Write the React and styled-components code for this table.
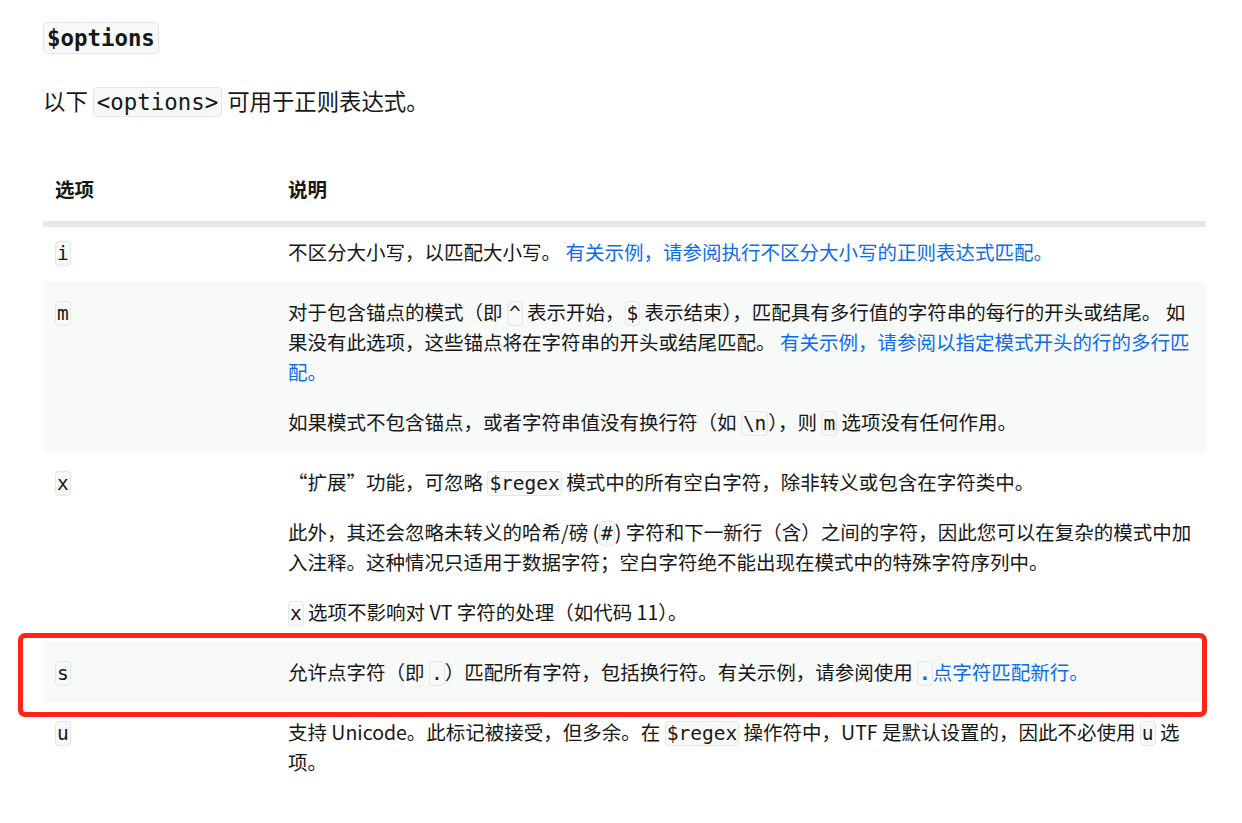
import styled, { createGlobalStyle } from "styled-components"

const GlobalStyle = createGlobalStyle`
  html, body {
    margin: 0;
    padding: 0;
    background: #fff;
  }
  body {
    font-family: "Noto Sans CJK SC", "Noto Sans", sans-serif;
    color: #171717;
  }
`

const Page = styled.div`
  padding: 22px 36px 40px 43px;
`

const Heading = styled.h3`
  margin: 0;
  display: flex;
  font-size: 22.4px;
`

const Code = styled.code`
  font-family: "DejaVu Sans Mono", "Liberation Mono", monospace;
  font-size: 1em;
  line-height: 1;
  font-weight: ${props => (props.bold ? 700 : 400)};
  background: #f7f8f8;
  border: 1px solid #e4e7e7;
  border-radius: 4px;
  padding: ${props => props.pad || "0 1px"};
  color: inherit;
`

const HeadingCode = styled(Code)`
  display: block;
  line-height: 30px;
  padding: 0 3px;
`

const Intro = styled.p`
  margin: 29px 0 0;
  font-size: 22.4px;
  line-height: 34px;
`

const Table = styled.table`
  margin-top: 42px;
  width: 100%;
  border-collapse: collapse;
  font-size: 19.5px;
  line-height: 30px;
`

const Th = styled.th`
  text-align: left;
  font-weight: 700;
  padding: 15px 12px 17px;
  border-bottom: 6px solid #e5e8e8;
  width: ${props => props.w || "auto"};
`

const Row = styled.tr`
  background: ${props => (props.shaded ? "#f8f9f9" : "#fff")};
`

const Td = styled.td`
  vertical-align: top;
  padding: ${props => (props.first ? "10px" : "15px")} 12px 15px;
  position: relative;
`

const Marker = styled.span`
  position: absolute;
  top: -9px;
  left: -25px;
  width: 1189px;
  height: 84px;
  box-sizing: border-box;
  border: 5px solid #fe2618;
  border-radius: 7px;
  pointer-events: none;
`

const Para = styled.p`
  margin: 0;
  & + & {
    margin-top: 20px;
  }
`

const Link = styled.a`
  color: #0b6cec;
  text-decoration: none;
`

const rows = [
  {
    opt: "i",
    desc: [
      <>
        不区分大小写，以匹配大小写。 <Link href="#">有关示例，请参阅执行不区分大小写的正则表达式匹配。</Link>
      </>,
    ],
  },
  {
    opt: "m",
    desc: [
      <>
        对于包含锚点的模式（即 <Code>^</Code> 表示开始，<Code>$</Code> 表示结束），匹配具有多行值的字符串的每行的开头或结尾。 如果没有此选项，这些锚点将在字符串的开头或结尾匹配。{" "}
        <Link href="#">有关示例，请参阅以指定模式开头的行的多行匹配。</Link>
      </>,
      <>
        如果模式不包含锚点，或者字符串值没有换行符（如 <Code>\n</Code>），则 <Code>m</Code> 选项没有任何作用。
      </>,
    ],
  },
  {
    opt: "x",
    desc: [
      <>
        “扩展”功能，可忽略 <Code>$regex</Code> 模式中的所有空白字符，除非转义或包含在字符类中。
      </>,
      <>
        此外，其还会忽略未转义的哈希/磅 (<Code>#</Code>) 字符和下一新行（含）之间的字符，因此您可以在复杂的模式中加入注释。这种情况只适用于数据字符；空白字符绝不能出现在模式中的特殊字符序列中。
      </>,
      <>
        <Code>x</Code> 选项不影响对 VT 字符的处理（如代码 11）。
      </>,
    ],
  },
  {
    opt: "s",
    marked: true,
    desc: [
      <>
        允许点字符（即 <Code>.</Code>）匹配所有字符，包括换行符。有关示例，请参阅使用{" "}
        <Link href="#">
          <Code bold>.</Code>点字符匹配新行。
        </Link>
      </>,
    ],
  },
  {
    opt: "u",
    desc: [
      <>
        支持 Unicode。此标记被接受，但多余。在 <Code>$regex</Code> 操作符中，UTF 是默认设置的，因此不必使用 <Code>u</Code> 选项。
      </>,
    ],
  },
]

const App = () => {
  return (
    <Page>
      <GlobalStyle />
      <Heading>
        <HeadingCode bold>$options</HeadingCode>
      </Heading>
      <Intro>
        以下 <Code pad="1px 3px">&lt;options&gt;</Code> 可用于正则表达式。
      </Intro>
      <Table>
        <thead>
          <tr>
            <Th w="209px">选项</Th>
            <Th>说明</Th>
          </tr>
        </thead>
        <tbody>
          {rows.map((r, i) => (
            <Row key={r.opt} shaded={i % 2 === 1}>
              <Td first={i === 0}>
                {r.marked && <Marker />}
                <Code>{r.opt}</Code>
              </Td>
              <Td first={i === 0}>
                {r.desc.map((d, j) => (
                  <Para key={j}>{d}</Para>
                ))}
              </Td>
            </Row>
          ))}
        </tbody>
      </Table>
    </Page>
  )
}

export default App
